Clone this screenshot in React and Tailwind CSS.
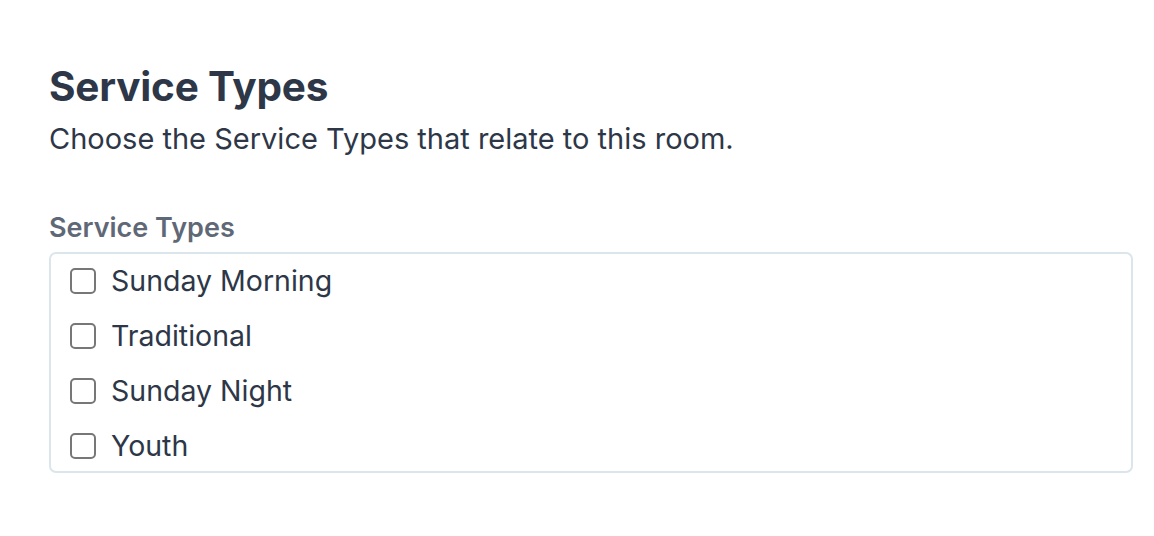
export default function App() {
  const items = ["Sunday Morning", "Traditional", "Sunday Night", "Youth"];
  return (
    <div className="w-[1154px] h-[536px] bg-white" style={{ fontFamily: "Inter, 'Noto Sans', sans-serif" }}>
      <div className="pl-[49px] pr-[21px] pt-[63px]">
        <h1 className="text-[40.5px] leading-[48px] font-bold text-[#2d3748] tracking-[-0.2px]">Service Types</h1>
        <p className="text-[29px] leading-[36px] text-[#2d3748] mt-[10px]">Choose the Service Types that relate to this room.</p>
        <div className="mt-[55px] text-[27px] leading-[32px] font-semibold text-[#5f6877]">Service Types</div>
        <div className="mt-[8px] h-[221px] border-2 border-[#dbe5ec] rounded-[7px] pl-[19px]">
          <div className="-mt-[1px]">
            {items.map((t) => (
              <label key={t} className="flex items-center h-[55px]">
                <span className="w-[26px] h-[26px] border-2 border-[#777] rounded-[5px] bg-white"></span>
                <span className="ml-[15px] text-[28.5px] leading-[55px] text-[#2d3748]">{t}</span>
              </label>
            ))}
          </div>
        </div>
      </div>
    </div>
  );
}
